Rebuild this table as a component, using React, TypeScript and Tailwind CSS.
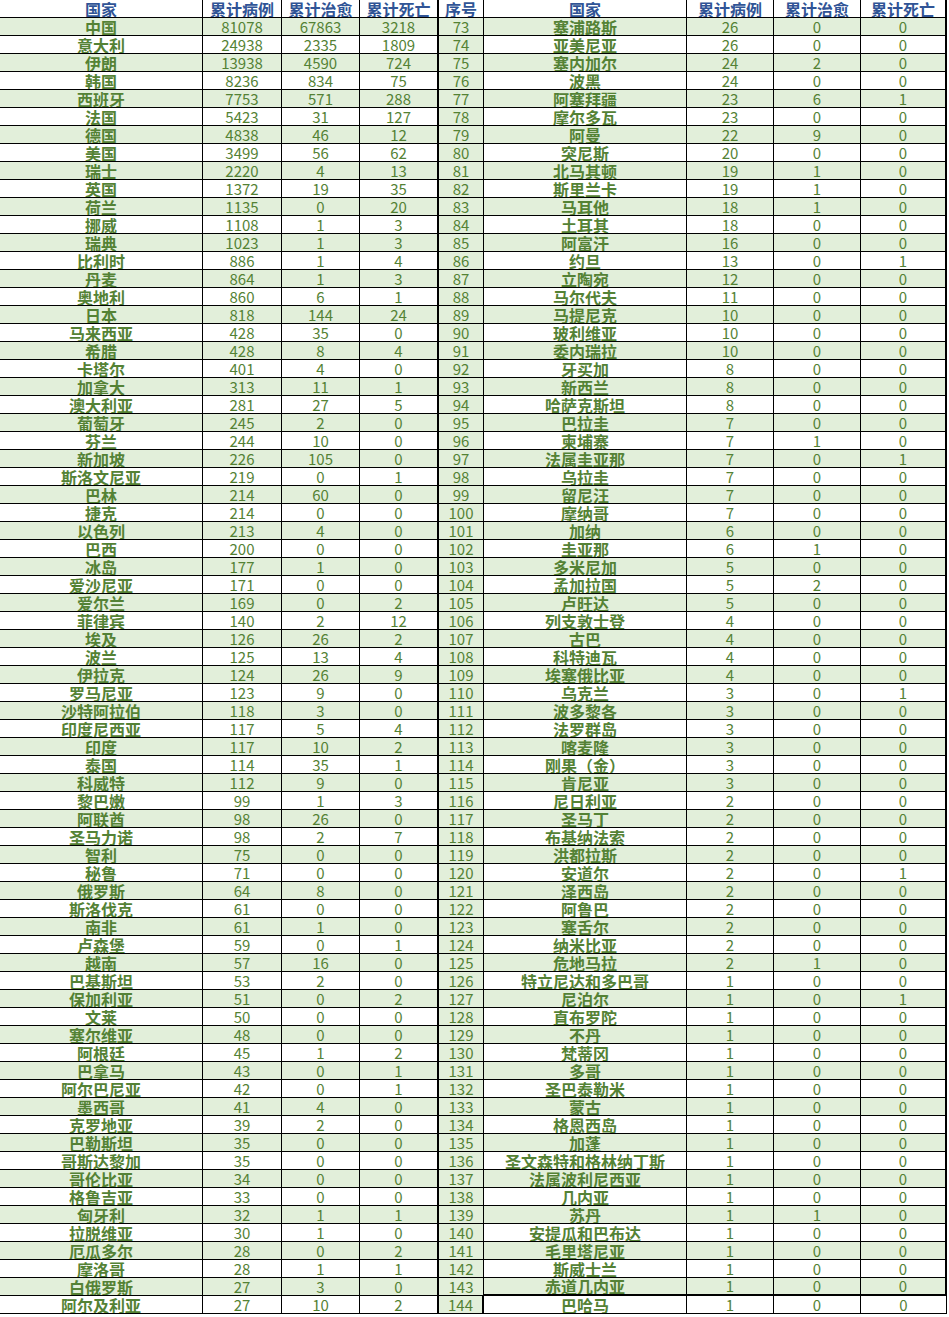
import React from 'react';

type Row = [string, number, number, number];

const left: Row[] = [
  ['中国', 81078, 67863, 3218],
  ['意大利', 24938, 2335, 1809],
  ['伊朗', 13938, 4590, 724],
  ['韩国', 8236, 834, 75],
  ['西班牙', 7753, 571, 288],
  ['法国', 5423, 31, 127],
  ['德国', 4838, 46, 12],
  ['美国', 3499, 56, 62],
  ['瑞士', 2220, 4, 13],
  ['英国', 1372, 19, 35],
  ['荷兰', 1135, 0, 20],
  ['挪威', 1108, 1, 3],
  ['瑞典', 1023, 1, 3],
  ['比利时', 886, 1, 4],
  ['丹麦', 864, 1, 3],
  ['奥地利', 860, 6, 1],
  ['日本', 818, 144, 24],
  ['马来西亚', 428, 35, 0],
  ['希腊', 428, 8, 4],
  ['卡塔尔', 401, 4, 0],
  ['加拿大', 313, 11, 1],
  ['澳大利亚', 281, 27, 5],
  ['葡萄牙', 245, 2, 0],
  ['芬兰', 244, 10, 0],
  ['新加坡', 226, 105, 0],
  ['斯洛文尼亚', 219, 0, 1],
  ['巴林', 214, 60, 0],
  ['捷克', 214, 0, 0],
  ['以色列', 213, 4, 0],
  ['巴西', 200, 0, 0],
  ['冰岛', 177, 1, 0],
  ['爱沙尼亚', 171, 0, 0],
  ['爱尔兰', 169, 0, 2],
  ['菲律宾', 140, 2, 12],
  ['埃及', 126, 26, 2],
  ['波兰', 125, 13, 4],
  ['伊拉克', 124, 26, 9],
  ['罗马尼亚', 123, 9, 0],
  ['沙特阿拉伯', 118, 3, 0],
  ['印度尼西亚', 117, 5, 4],
  ['印度', 117, 10, 2],
  ['泰国', 114, 35, 1],
  ['科威特', 112, 9, 0],
  ['黎巴嫩', 99, 1, 3],
  ['阿联酋', 98, 26, 0],
  ['圣马力诺', 98, 2, 7],
  ['智利', 75, 0, 0],
  ['秘鲁', 71, 0, 0],
  ['俄罗斯', 64, 8, 0],
  ['斯洛伐克', 61, 0, 0],
  ['南非', 61, 1, 0],
  ['卢森堡', 59, 0, 1],
  ['越南', 57, 16, 0],
  ['巴基斯坦', 53, 2, 0],
  ['保加利亚', 51, 0, 2],
  ['文莱', 50, 0, 0],
  ['塞尔维亚', 48, 0, 0],
  ['阿根廷', 45, 1, 2],
  ['巴拿马', 43, 0, 1],
  ['阿尔巴尼亚', 42, 0, 1],
  ['墨西哥', 41, 4, 0],
  ['克罗地亚', 39, 2, 0],
  ['巴勒斯坦', 35, 0, 0],
  ['哥斯达黎加', 35, 0, 0],
  ['哥伦比亚', 34, 0, 0],
  ['格鲁吉亚', 33, 0, 0],
  ['匈牙利', 32, 1, 1],
  ['拉脱维亚', 30, 1, 0],
  ['厄瓜多尔', 28, 0, 2],
  ['摩洛哥', 28, 1, 1],
  ['白俄罗斯', 27, 3, 0],
  ['阿尔及利亚', 27, 10, 2],
];

const right: Row[] = [
  ['塞浦路斯', 26, 0, 0],
  ['亚美尼亚', 26, 0, 0],
  ['塞内加尔', 24, 2, 0],
  ['波黑', 24, 0, 0],
  ['阿塞拜疆', 23, 6, 1],
  ['摩尔多瓦', 23, 0, 0],
  ['阿曼', 22, 9, 0],
  ['突尼斯', 20, 0, 0],
  ['北马其顿', 19, 1, 0],
  ['斯里兰卡', 19, 1, 0],
  ['马耳他', 18, 1, 0],
  ['土耳其', 18, 0, 0],
  ['阿富汗', 16, 0, 0],
  ['约旦', 13, 0, 1],
  ['立陶宛', 12, 0, 0],
  ['马尔代夫', 11, 0, 0],
  ['马提尼克', 10, 0, 0],
  ['玻利维亚', 10, 0, 0],
  ['委内瑞拉', 10, 0, 0],
  ['牙买加', 8, 0, 0],
  ['新西兰', 8, 0, 0],
  ['哈萨克斯坦', 8, 0, 0],
  ['巴拉圭', 7, 0, 0],
  ['柬埔寨', 7, 1, 0],
  ['法属圭亚那', 7, 0, 1],
  ['乌拉圭', 7, 0, 0],
  ['留尼汪', 7, 0, 0],
  ['摩纳哥', 7, 0, 0],
  ['加纳', 6, 0, 0],
  ['圭亚那', 6, 1, 0],
  ['多米尼加', 5, 0, 0],
  ['孟加拉国', 5, 2, 0],
  ['卢旺达', 5, 0, 0],
  ['列支敦士登', 4, 0, 0],
  ['古巴', 4, 0, 0],
  ['科特迪瓦', 4, 0, 0],
  ['埃塞俄比亚', 4, 0, 0],
  ['乌克兰', 3, 0, 1],
  ['波多黎各', 3, 0, 0],
  ['法罗群岛', 3, 0, 0],
  ['喀麦隆', 3, 0, 0],
  ['刚果（金）', 3, 0, 0],
  ['肯尼亚', 3, 0, 0],
  ['尼日利亚', 2, 0, 0],
  ['圣马丁', 2, 0, 0],
  ['布基纳法索', 2, 0, 0],
  ['洪都拉斯', 2, 0, 0],
  ['安道尔', 2, 0, 1],
  ['泽西岛', 2, 0, 0],
  ['阿鲁巴', 2, 0, 0],
  ['塞舌尔', 2, 0, 0],
  ['纳米比亚', 2, 0, 0],
  ['危地马拉', 2, 1, 0],
  ['特立尼达和多巴哥', 1, 0, 0],
  ['尼泊尔', 1, 0, 1],
  ['直布罗陀', 1, 0, 0],
  ['不丹', 1, 0, 0],
  ['梵蒂冈', 1, 0, 0],
  ['多哥', 1, 0, 0],
  ['圣巴泰勒米', 1, 0, 0],
  ['蒙古', 1, 0, 0],
  ['格恩西岛', 1, 0, 0],
  ['加蓬', 1, 0, 0],
  ['圣文森特和格林纳丁斯', 1, 0, 0],
  ['法属波利尼西亚', 1, 0, 0],
  ['几内亚', 1, 0, 0],
  ['苏丹', 1, 1, 0],
  ['安提瓜和巴布达', 1, 0, 0],
  ['毛里塔尼亚', 1, 0, 0],
  ['斯威士兰', 1, 0, 0],
  ['赤道几内亚', 1, 0, 0],
  ['巴哈马', 1, 0, 0],
];

const base =
  "h-[18px] border-black flex items-center justify-center overflow-hidden whitespace-nowrap leading-[16px]";
const nameCls = "font-['Noto_Sans_CJK_SC',sans-serif] font-bold text-[16px] text-[#548235]";
const numCls = "font-['Noto_Sans_CJK_SC',sans-serif] font-normal text-[15px] text-[#548235]";
const headCls = "font-['Noto_Sans_CJK_SC',sans-serif] font-bold text-[16px] text-[#305496] bg-white";

const Cell: React.FC<{ className: string; children: React.ReactNode }> = ({ className, children }) => (
  <div className={`${base} ${className}`}>{children}</div>
);

const headers = ['国家', '累计病例', '累计治愈', '累计死亡', '序号', '国家', '累计病例', '累计治愈', '累计死亡'];

export default function App() {
  const last = left.length - 1;
  return (
    <div className="w-[949px] h-[1317px] bg-white">
      <div className="grid grid-cols-[203px_79px_78px_79px_45px_203px_87px_87px_86px]">
        {headers.map((h, i) => (
          <Cell
            key={'h' + i}
            className={`${headCls} border-b ${i === 3 || i === 8 ? 'border-r-2' : 'border-r'}`}
          >
            {h}
          </Cell>
        ))}
        {left.map((l, i) => {
          const r = right[i];
          const bg = i % 2 === 0 ? 'bg-[#e2efda]' : 'bg-white';
          const isLast = i === last;
          const rb = i === last - 1 ? 'border-b-2' : 'border-b';
          return (
            <React.Fragment key={i}>
              <Cell className={`${nameCls} ${bg} border-b border-r`}>{l[0]}</Cell>
              <Cell className={`${numCls} ${bg} border-b border-r`}>{l[1]}</Cell>
              <Cell className={`${numCls} ${bg} border-b border-r`}>{l[2]}</Cell>
              <Cell className={`${numCls} ${bg} border-b border-r-2`}>{l[3]}</Cell>
              <Cell className={`${numCls} bg-[#e2efda] border-b ${isLast ? 'border-r-2' : 'border-r'}`}>
                {73 + i}
              </Cell>
              <Cell className={`${nameCls} ${bg} ${rb} border-r`}>{r[0]}</Cell>
              <Cell className={`${numCls} ${bg} ${rb} border-r`}>{r[1]}</Cell>
              <Cell className={`${numCls} ${bg} ${rb} border-r`}>{r[2]}</Cell>
              <Cell className={`${numCls} ${bg} ${rb} ${isLast ? 'border-r' : 'border-r-2'}`}>{r[3]}</Cell>
            </React.Fragment>
          );
        })}
      </div>
    </div>
  );
}
